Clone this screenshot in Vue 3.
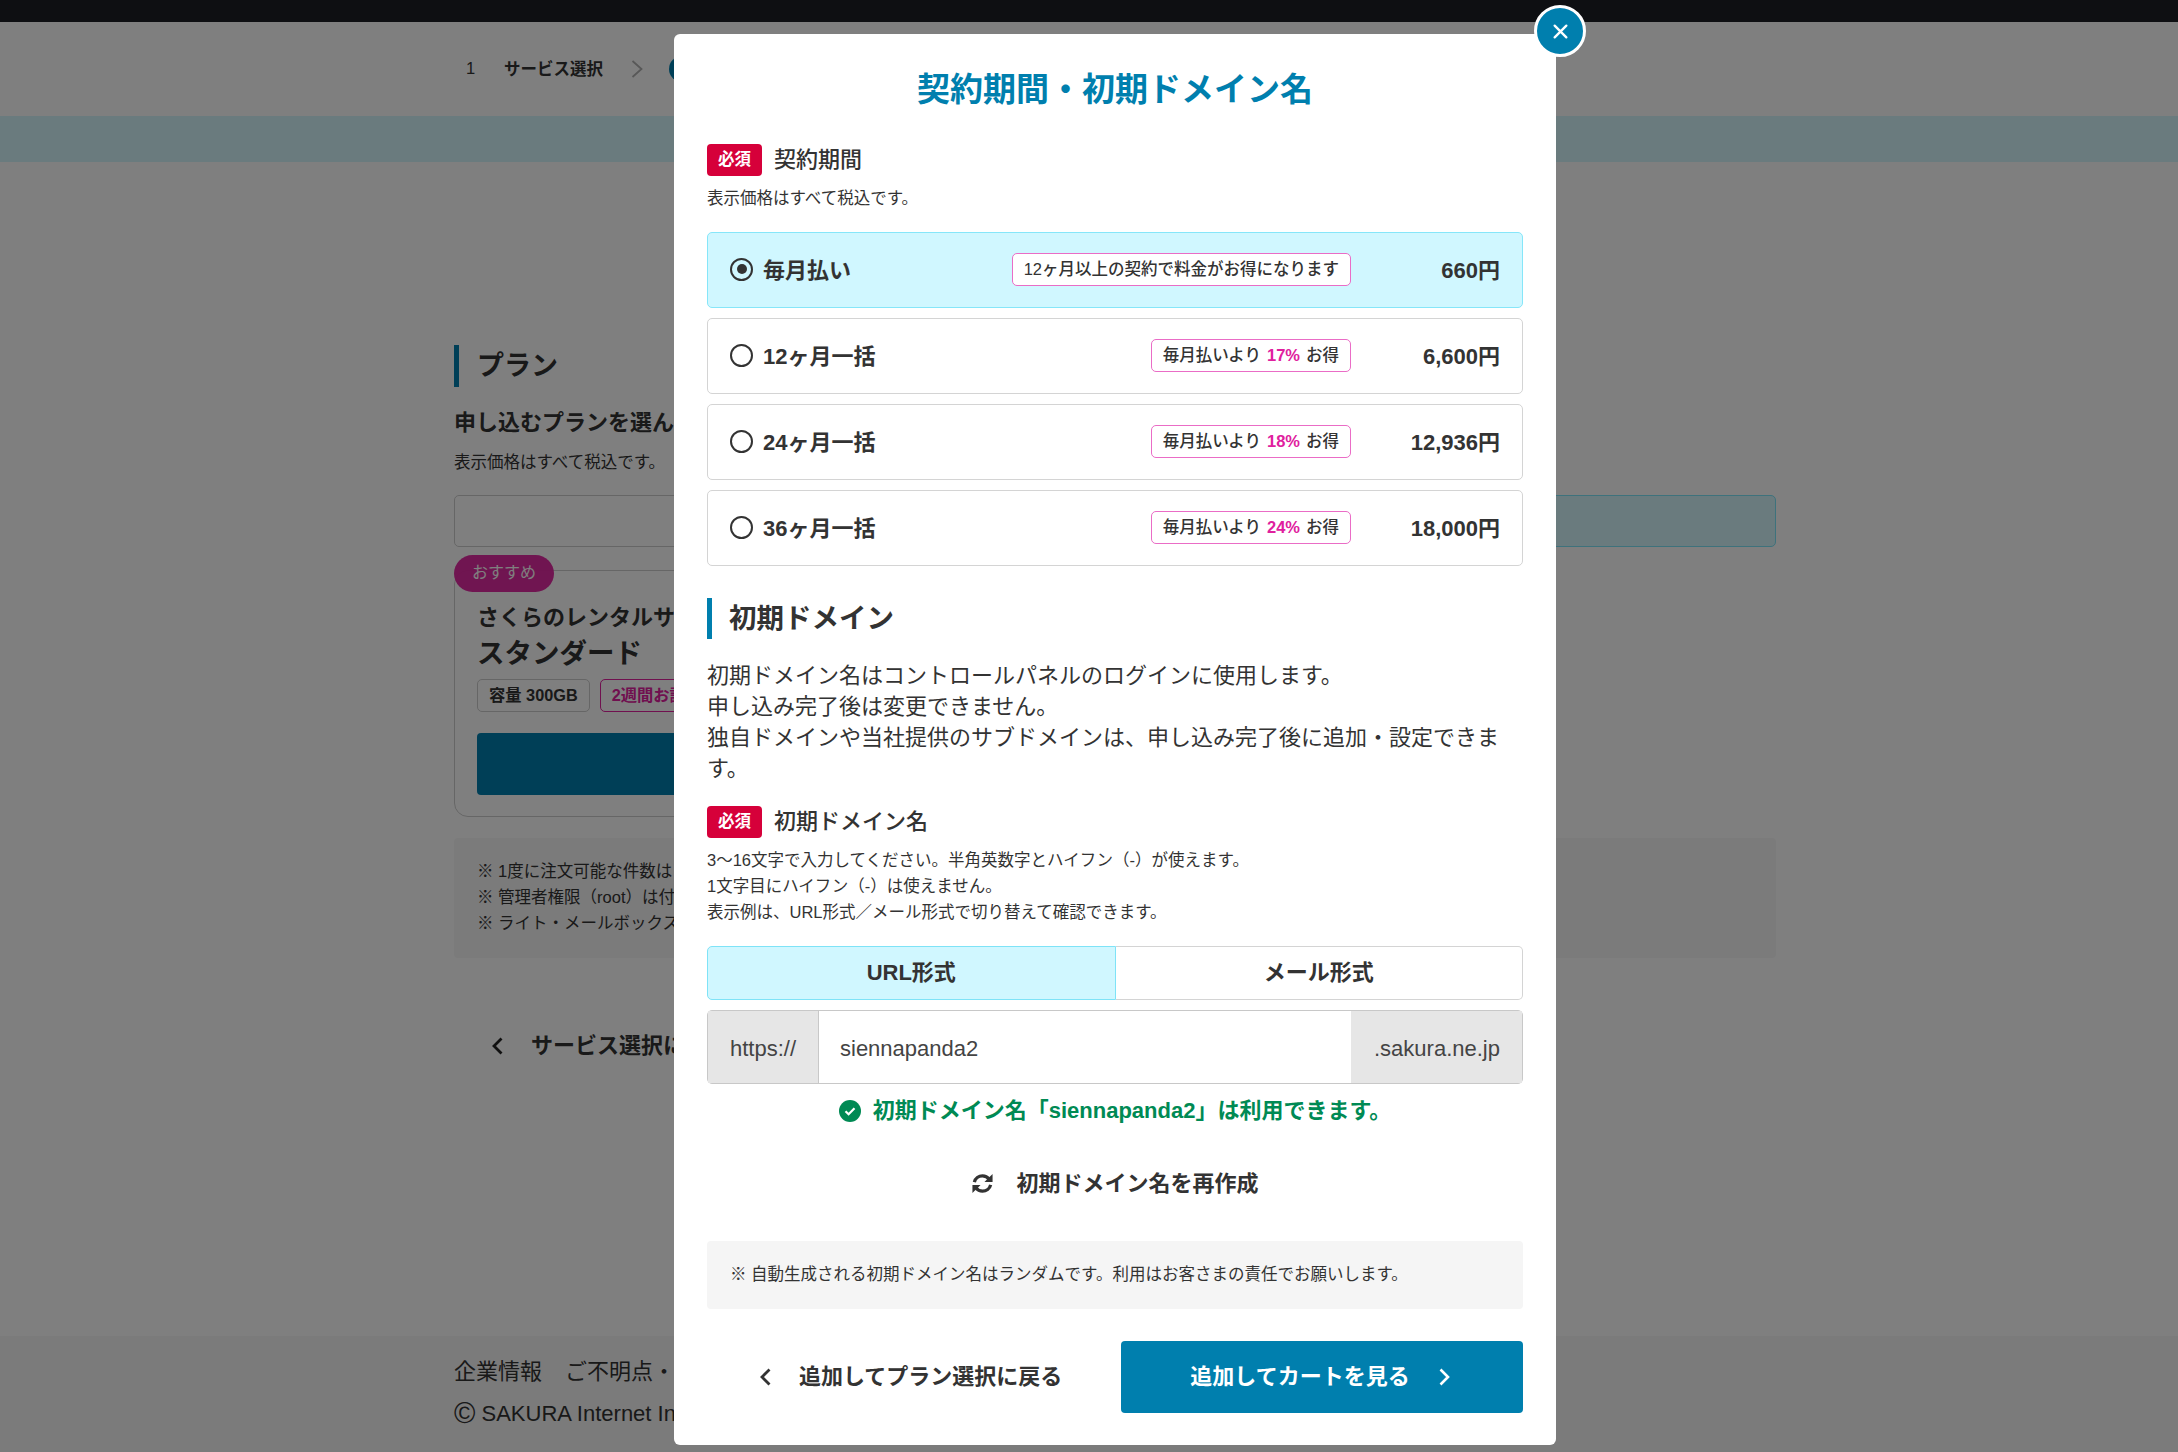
<template>
  <div class="screen">
    <!-- page behind the dialog -->
    <div class="page">
      <div class="topbar"></div>
      <div class="steps">
        <span class="step-no">1</span>
        <span class="step-name">サービス選択</span>
        <svg class="step-arrow" viewBox="0 0 12 18" fill="none"><path d="M1.5 1 10.5 9 1.5 17" stroke="#b0b0b0" stroke-width="1.8" /></svg>
        <span class="step-dot"></span>
      </div>
      <div class="band"></div>
      <main class="main">
        <h2 class="plan-title">プラン</h2>
        <h3 class="plan-sub">申し込むプランを選んでください</h3>
        <p class="plan-tax">表示価格はすべて税込です。</p>
        <div class="plan-switch">
          <div class="switch-off"></div>
          <div class="switch-on"></div>
        </div>
        <div class="plan-card">
          <span class="recommend">おすすめ</span>
          <div class="card-service">さくらのレンタルサーバ</div>
          <div class="card-name">スタンダード</div>
          <div class="card-tags">
            <span class="tag">容量 300GB</span>
            <span class="tag tag-pink">2週間お試し</span>
          </div>
          <div class="card-button"></div>
        </div>
        <ul class="page-notes">
          <li>※ 1度に注文可能な件数は</li>
          <li>※ 管理者権限（root）は付与</li>
          <li>※ ライト・メールボックス</li>
        </ul>
        <div class="page-back">
          <svg viewBox="0 0 12 18" fill="none"><path d="M10.5 1.5 3 9l7.5 7.5" stroke="#222" stroke-width="2.8" /></svg>
          <span>サービス選択に戻る</span>
        </div>
      </main>
      <footer class="footer">
        <div class="footer-links"><span>企業情報</span><span>ご不明点・ご質問</span></div>
        <div class="footer-copy"><span class="copy-mark">©</span> SAKURA Internet Inc.</div>
      </footer>
    </div>

    <div class="overlay">
      <div class="modal">
        <button class="close" type="button">
          <svg viewBox="0 0 16 16" fill="none"><path d="M2.5 2.5l11 11M13.5 2.5l-11 11" stroke="#fff" stroke-width="2.2" stroke-linecap="round" /></svg>
        </button>

        <h1 class="modal-title">契約期間・初期ドメイン名</h1>

        <div class="field-label">
          <span class="required">必須</span>
          <span class="label-text">契約期間</span>
        </div>
        <p class="small tax-note">表示価格はすべて税込です。</p>

        <div class="terms">
          <div v-for="term in terms" :key="term.name" class="term" :class="{ selected: term.selected }">
            <span class="radio"></span>
            <span class="term-name">{{ term.name }}</span>
            <span class="term-badge">
              <template v-if="term.rate">毎月払いより<em>{{ term.rate }}</em>お得</template>
              <template v-else>12ヶ月以上の契約で料金がお得になります</template>
            </span>
            <span class="term-price">{{ term.price }}</span>
          </div>
        </div>

        <h2 class="section-title">初期ドメイン</h2>
        <p class="lead">
          初期ドメイン名はコントロールパネルのログインに使用します。<br />
          申し込み完了後は変更できません。<br />
          独自ドメインや当社提供のサブドメインは、申し込み完了後に追加・設定できます。
        </p>

        <div class="field-label domain-label">
          <span class="required">必須</span>
          <span class="label-text">初期ドメイン名</span>
        </div>
        <p class="small domain-note">
          3〜16文字で入力してください。半角英数字とハイフン（-）が使えます。<br />
          1文字目にハイフン（-）は使えません。<br />
          表示例は、URL形式／メール形式で切り替えて確認できます。
        </p>

        <div class="tabs">
          <div class="tab active">URL形式</div>
          <div class="tab">メール形式</div>
        </div>

        <div class="domain-input">
          <span class="prefix">https://</span>
          <span class="value">siennapanda2</span>
          <span class="suffix">.sakura.ne.jp</span>
        </div>

        <div class="success">
          <svg viewBox="0 0 22 22"><circle cx="11" cy="11" r="11" fill="#008a54" /><path d="M6.5 11.3l3.1 3 5.9-6" fill="none" stroke="#fff" stroke-width="2.2" /></svg>
          <span class="row-text">初期ドメイン名「siennapanda2」は利用できます。</span>
        </div>

        <div class="regen">
          <svg viewBox="0 0 24 24" fill="none" stroke="#333" stroke-width="3.4">
            <path d="M3.5 10.5C4.5 6.5 8 4 12 4c3 0 5.2 1.2 7 3.6" />
            <path d="M20.5 13.5C19.5 17.5 16 20 12 20c-3 0-5.2-1.2-7-3.6" />
            <path d="M22.5 2v8.5H14z" fill="#333" stroke="none" />
            <path d="M1.5 22v-8.5H10z" fill="#333" stroke="none" />
          </svg>
          <span class="row-text">初期ドメイン名を再作成</span>
        </div>

        <div class="random-note">※ 自動生成される初期ドメイン名はランダムです。利用はお客さまの責任でお願いします。</div>

        <div class="actions">
          <div class="back">
            <svg viewBox="0 0 12 18" fill="none"><path d="M10.5 1.5 3 9l7.5 7.5" stroke="#333" stroke-width="2.8" /></svg>
            <span class="row-text">追加してプラン選択に戻る</span>
          </div>
          <div class="next">
            <span class="row-text">追加してカートを見る</span>
            <svg viewBox="0 0 12 18" fill="none"><path d="M1.5 1.5 9 9l-7.5 7.5" stroke="#fff" stroke-width="2.6" /></svg>
          </div>
        </div>
      </div>
    </div>
  </div>
</template>

<script setup>
const terms = [
  { name: '毎月払い', price: '660円', selected: true },
  { name: '12ヶ月一括', price: '6,600円', rate: '17%' },
  { name: '24ヶ月一括', price: '12,936円', rate: '18%' },
  { name: '36ヶ月一括', price: '18,000円', rate: '24%' },
];
</script>

<style>
html,
body {
  margin: 0;
  background: #fff;
}
</style>

<style scoped>
* {
  box-sizing: border-box;
}

.screen {
  position: relative;
  width: 2178px;
  height: 1452px;
  overflow: hidden;
  font-family: "Liberation Sans", "Noto Sans CJK JP", sans-serif;
  color: #333;
}

/* page */
.page {
  height: 100%;
  display: flex;
  flex-direction: column;
  background: #fff;
}

.topbar {
  height: 22px;
  background: #1c1e24;
}

.steps {
  height: 94px;
  padding-left: 466px;
  display: flex;
  align-items: center;
  font-size: 16.5px;
}

.step-no {
  width: 38px;
  margin-bottom: 2px;
}

.step-name {
  width: 127px;
  margin-bottom: 2px;
  font-weight: 700;
}

.step-arrow {
  width: 12px;
  height: 18px;
}

.step-dot {
  width: 26px;
  height: 26px;
  margin-left: 26px;
  border-radius: 50%;
  background: #007fae;
}

.band {
  height: 46px;
  background: #d4f6fc;
}

.main {
  flex: 1;
  width: 1322px;
  margin-left: 454px;
  padding-top: 183px;
}

.plan-title {
  height: 42px;
  margin: 0;
  padding-left: 18px;
  border-left: 5px solid #007fae;
  font-size: 27px;
  line-height: 42px;
}

.plan-sub {
  margin: 20px 0 0;
  font-size: 22px;
  line-height: 32px;
}

.plan-tax {
  margin: 11px 0 0;
  font-size: 16.5px;
  line-height: 24px;
}

.plan-switch {
  display: flex;
  height: 52px;
  margin-top: 21px;
}

.switch-off,
.switch-on {
  flex: 1;
  border: 1.5px solid #ccc;
}

.switch-off {
  border-radius: 5px 0 0 5px;
}

.switch-on {
  border-color: #7de4f8;
  border-radius: 0 5px 5px 0;
  background: #d4f6fc;
}

.plan-card {
  position: relative;
  width: 640px;
  height: 247px;
  margin-top: 23px;
  padding: 32px 22px 0;
  border: 1.5px solid #ccc;
  border-radius: 14px;
}

.recommend {
  position: absolute;
  top: -16px;
  left: -1px;
  width: 100px;
  height: 37px;
  border-radius: 19px;
  background: #e0209e;
  color: #fff;
  font-size: 16px;
  line-height: 36px;
  text-align: center;
  opacity: 0.95;
}

.card-service {
  font-size: 22px;
  font-weight: 700;
  line-height: 30px;
}

.card-name {
  margin-top: 3px;
  font-size: 27.5px;
  font-weight: 700;
  line-height: 36px;
}

.card-tags {
  display: flex;
  gap: 10px;
  margin-top: 7px;
}

.tag {
  height: 33px;
  padding: 0 11px;
  border: 1.5px solid #ccc;
  border-radius: 5px;
  font-size: 16.3px;
  font-weight: 700;
  line-height: 30px;
}

.tag-pink {
  border-color: #e0209e;
  color: #e0209e;
}

.card-button {
  height: 62px;
  margin-top: 21px;
  border-radius: 4px;
  background: #007fae;
}

.page-notes {
  height: 120px;
  margin: 21px 0 0;
  padding: 20px 23px 0;
  list-style: none;
  border-radius: 4px;
  background: #f6f6f6;
  font-size: 16.5px;
  line-height: 26px;
}

.page-back {
  display: flex;
  align-items: center;
  gap: 28px;
  margin: 72px 0 0 37px;
  font-size: 22px;
  font-weight: 700;
  line-height: 32px;
}

.page-back svg {
  width: 12px;
  height: 18px;
}

.footer {
  height: 116px;
  padding: 21px 0 0 454px;
  background: #f6f6f6;
  font-size: 22px;
  line-height: 30px;
}

.footer-links {
  display: flex;
  gap: 23px;
}

.footer-copy {
  margin-top: 12px;
}

.copy-mark {
  font-size: 29px;
  line-height: 24px;
  vertical-align: -2px;
}

/* dialog */
.overlay {
  position: absolute;
  inset: 0;
  background: rgba(0, 0, 0, 0.5);
}

.modal {
  position: relative;
  width: 882px;
  height: 1411px;
  margin: 34px 0 0 674px;
  padding: 34px 33px 0;
  border-radius: 6px;
  background: #fff;
}

.close {
  position: absolute;
  top: -29px;
  right: -30px;
  width: 52px;
  height: 52px;
  padding: 0;
  display: flex;
  align-items: center;
  justify-content: center;
  border: 3px solid #fff;
  border-radius: 50%;
  background: #007fae;
}

.close svg {
  width: 17px;
  height: 17px;
}

.modal-title {
  margin: 0;
  color: #007fae;
  font-size: 33px;
  line-height: 44px;
  text-align: center;
}

.field-label {
  display: flex;
  align-items: center;
  gap: 12px;
  height: 32px;
  margin-top: 32px;
  font-size: 22px;
  font-weight: 500;
}

.label-text,
.row-text {
  margin-bottom: 6px;
}

.required {
  width: 55px;
  height: 32px;
  border-radius: 4px;
  background: #d6003a;
  color: #fff;
  font-size: 16.5px;
  font-weight: 700;
  line-height: 31px;
  text-align: center;
}

.small {
  margin: 0;
  font-size: 16.5px;
}

.tax-note {
  margin-top: 10px;
  line-height: 24px;
}

.terms {
  display: flex;
  flex-direction: column;
  gap: 10px;
  margin-top: 22px;
}

.term {
  display: flex;
  align-items: center;
  height: 76px;
  padding: 0 22px 2px;
  border: 1.5px solid #d4d4d4;
  border-radius: 5px;
}

.term.selected {
  border-color: #86e6f9;
  background: #d0f7ff;
}

.radio {
  position: relative;
  width: 23px;
  height: 23px;
  border: 2px solid #333;
  border-radius: 50%;
  background: #fff;
}

.selected .radio {
  background: none;
}

.selected .radio::after {
  content: "";
  position: absolute;
  inset: 4.5px;
  border-radius: 50%;
  background: #333;
}

.term-name {
  margin: 0 0 3px 10px;
  font-size: 22px;
  font-weight: 700;
}

.term-badge {
  height: 33px;
  margin-left: auto;
  padding: 0 11px;
  border: 1.5px solid #ea6cc6;
  border-radius: 5px;
  background: #fff;
  font-size: 16.5px;
  font-weight: 500;
  line-height: 31px;
}

.term-badge em {
  margin: 0 6px;
  color: #e0209e;
  font-style: normal;
  font-weight: 700;
}

.term-price {
  width: 149px;
  margin-bottom: 3px;
  font-size: 22px;
  font-weight: 700;
  text-align: right;
}

.section-title {
  height: 41px;
  margin: 32px 0 0;
  padding-left: 17px;
  border-left: 5px solid #007fae;
  font-size: 27.5px;
  line-height: 41px;
}

.lead {
  margin: 20.5px 0 0;
  font-size: 22px;
  line-height: 31px;
}

.domain-label {
  margin-top: 22px;
}

.domain-note {
  margin-top: 9px;
  line-height: 26px;
}

.tabs {
  display: flex;
  height: 54px;
  margin-top: 21px;
}

.tab {
  flex: 1;
  border: 1.5px solid #d4d4d4;
  border-left: 0;
  border-radius: 0 5px 5px 0;
  font-size: 22px;
  font-weight: 700;
  line-height: 51px;
  text-align: center;
}

.tab.active {
  border: 1.5px solid #7fe3f7;
  border-radius: 5px 0 0 5px;
  background: #d0f7ff;
}

.domain-input {
  display: flex;
  height: 74px;
  margin-top: 10px;
  border: 1.5px solid #c8c8c8;
  border-radius: 5px;
  color: #444;
  font-size: 22px;
  line-height: 75px;
}

.prefix {
  width: 111px;
  border-right: 1.5px solid #c8c8c8;
  background: #e6e6e6;
  text-align: center;
}

.value {
  flex: 1;
  padding-left: 21px;
}

.suffix {
  width: 171px;
  padding-left: 23px;
  background: #e6e6e6;
}

.success {
  display: flex;
  align-items: center;
  justify-content: center;
  gap: 12px;
  height: 30px;
  margin-top: 12px;
  color: #008a54;
  font-size: 22px;
  font-weight: 700;
}

.success svg {
  width: 22px;
  height: 22px;
}

.regen {
  display: flex;
  align-items: center;
  justify-content: center;
  gap: 22px;
  height: 30px;
  margin-top: 43px;
  font-size: 22px;
  font-weight: 700;
}

.regen svg {
  width: 23px;
  height: 23px;
}

.random-note {
  height: 68px;
  margin-top: 42px;
  padding-left: 23px;
  border-radius: 4px;
  background: #f5f5f5;
  font-size: 16.5px;
  line-height: 66px;
}

.actions {
  display: flex;
  align-items: center;
  margin-top: 32px;
}

.back {
  width: 414px;
  padding-left: 52px;
  display: flex;
  align-items: center;
  gap: 28px;
  font-size: 22px;
  font-weight: 700;
}

.back svg {
  width: 12px;
  height: 18px;
}

.next {
  flex: 1;
  height: 72px;
  padding-right: 3px;
  display: flex;
  align-items: center;
  justify-content: center;
  gap: 29px;
  border-radius: 4px;
  background: #007fae;
  color: #fff;
  font-size: 22px;
  font-weight: 700;
}

.next svg {
  width: 12px;
  height: 18px;
}
</style>
